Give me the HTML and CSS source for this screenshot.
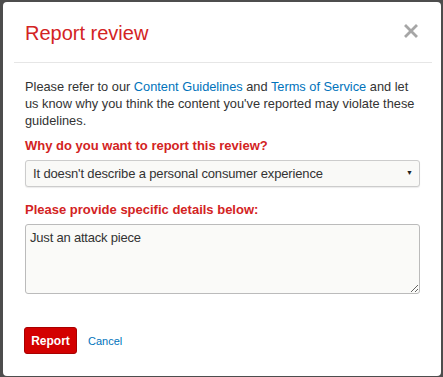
FILE: index.html
```html
<!DOCTYPE html>
<html lang="en">
  <head>
    <meta charset="UTF-8" />
    <meta name="viewport" content="width=device-width, initial-scale=1.0" />
    <title>Report review</title>
    <link rel="stylesheet" href="styles.css">
  </head>
  <body>
    <div class="dialog">
      <header class="dialog-header">
        <h2 class="dialog-title">Report review</h2>
        <button class="close-button" aria-label="Close">
          <svg width="14" height="14" viewBox="0 0 14 14">
            <path d="M2 2 L12 12 M12 2 L2 12" stroke="#a6a6a6" stroke-width="2.8" stroke-linecap="square" />
          </svg>
        </button>
      </header>

      <form class="dialog-body">
        <p class="intro">Please refer to our <a href="#">Content Guidelines</a> and <a href="#">Terms of Service</a> and let us know why you think the content you've reported may violate these guidelines.</p>

        <label class="field-label" for="reason">Why do you want to report this review?</label>
        <div class="select-wrap">
          <select id="reason" class="select">
            <option>It doesn't describe a personal consumer experience</option>
          </select>
          <span class="select-arrow">&#9660;</span>
        </div>

        <label class="field-label" for="details">Please provide specific details below:</label>
        <textarea id="details" class="details">Just an attack piece</textarea>

        <div class="actions">
          <button type="button" class="report-btn">Report</button>
          <a href="#" class="cancel-link">Cancel</a>
        </div>
      </form>
    </div>
  </body>
</html>
```

FILE: styles.css
```css
* {
  margin: 0;
  padding: 0;
  box-sizing: border-box;
  font-family: Arial, "Liberation Sans", sans-serif;
}

html,
body {
  height: 100%;
}

body {
  background-color: #4d4d4d;
  padding: 2px 2px 1px 3px;
  overflow: hidden;
}

.dialog {
  background-color: white;
  border-radius: 4px;
  height: 100%;
  display: flex;
  flex-direction: column;
}

/* Header */
.dialog-header {
  margin: 0 9px 0 11px;
  padding: 0 14px 0 11px;
  height: 61px;
  border-bottom: 1px solid #e6e6e6;
  display: flex;
  justify-content: space-between;
  align-items: center;
}

.dialog-title {
  font-size: 20px;
  font-weight: normal;
  color: #d32323;
  padding-top: 3px;
}

.close-button {
  background: none;
  border: none;
  cursor: pointer;
  display: flex;
  margin-top: -3px;
}

/* Body */
.dialog-body {
  padding: 15px 21px 0 22px;
  display: flex;
  flex-direction: column;
}

.intro {
  font-size: 12.8px;
  line-height: 17px;
  color: #333;
  margin-bottom: 8px;
}

.intro a {
  color: #0073bb;
  text-decoration: none;
}

.field-label {
  font-size: 13px;
  line-height: 18px;
  font-weight: bold;
  color: #d32323;
  margin-bottom: 5px;
}

.select-wrap {
  position: relative;
  margin-bottom: 14px;
}

.select {
  display: block;
  width: 100%;
  height: 27px;
  padding: 0 24px 0 7px;
  font-size: 13px;
  letter-spacing: -0.15px;
  color: #333;
  background-color: #f9f9f7;
  border: 1px solid #cccccc;
  border-radius: 3px;
  box-shadow: 0 1px 1px rgba(0, 0, 0, 0.08);
  appearance: none;
  -webkit-appearance: none;
}

.select-arrow {
  position: absolute;
  right: 7px;
  top: 9px;
  font-size: 7px;
  color: #222;
  pointer-events: none;
}

.details {
  display: block;
  width: 100%;
  height: 70px;
  padding: 5px 4px;
  font-size: 13px;
  line-height: 16px;
  letter-spacing: -0.2px;
  color: #333;
  background-color: #fafaf8;
  border: 1px solid #bbbbbb;
  border-radius: 3px;
  resize: both;
}

.actions {
  display: flex;
  align-items: center;
  gap: 11px;
  margin-top: 33px;
}

.report-btn {
  width: 53px;
  height: 27px;
  margin-left: -1px;
  background-color: #d30000;
  border: 1px solid #a80000;
  border-radius: 3px;
  color: white;
  font-size: 12px;
  font-weight: bold;
  cursor: pointer;
}

.cancel-link {
  color: #0073bb;
  text-decoration: none;
  font-size: 11px;
}
```
